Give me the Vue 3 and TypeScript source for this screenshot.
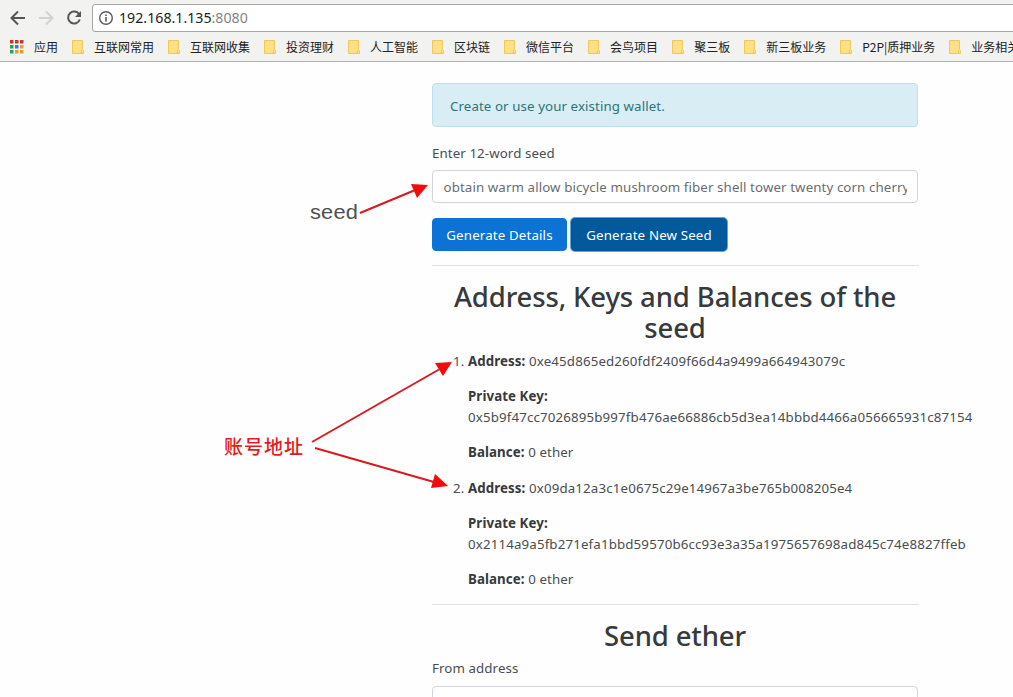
<script setup lang="ts">
import { ref } from 'vue'

interface Account {
  address: string
  privateKey: string
  balance: number
}

const bookmarks: string[] = [
  '互联网常用', '互联网收集', '投资理财', '人工智能', '区块链', '微信平台',
  '会鸟项目', '聚三板', '新三板业务', 'P2P|质押业务', '业务相关',
]

const dots: string[] = [
  '#c8372f', '#c8372f', '#c8372f',
  '#2f9e58', '#3b78d8', '#e0a030',
  '#2f9e58', '#e0a030', '#e0a030',
]

const seed = ref('obtain warm allow bicycle mushroom fiber shell tower twenty corn cherry')

const accounts: Account[] = [
  {
    address: '0xe45d865ed260fdf2409f66d4a9499a664943079c',
    privateKey: '0x5b9f47cc7026895b997fb476ae66886cb5d3ea14bbbd4466a056665931c87154',
    balance: 0,
  },
  {
    address: '0x09da12a3c1e0675c29e14967a3be765b008205e4',
    privateKey: '0x2114a9a5fb271efa1bbd59570b6cc93e3a35a1975657698ad845c74e8827ffeb',
    balance: 0,
  },
]
</script>

<template>
  <div class="window">
    <header class="chrome">
      <div class="toolbar">
        <svg class="nav" width="92" height="32" viewBox="0 0 92 32" fill="none">
          <path d="M25 18H12M18 11.5L11.5 18L18 24.5" stroke="#555" stroke-width="2" />
          <path d="M39 18H52M46 11.5L52.500 18L46 24.500" stroke="#d3d3d3" stroke-width="2" />
          <path d="M79.300 14.500A6 6 0 1 0 79.800 19.500" stroke="#555" stroke-width="2" />
          <path d="M81 11V17H75Z" fill="#555" />
        </svg>
        <div class="omnibox">
          <svg width="16" height="16" viewBox="0 0 16 16" fill="none">
            <circle cx="8" cy="8" r="6.300" stroke="#5a5a5a" stroke-width="1.400" />
            <path d="M8 7V11.500M8 4.500V6" stroke="#5a5a5a" stroke-width="1.600" />
          </svg>
          <span class="url">192.168.1.135<span class="port">:8080</span></span>
        </div>
      </div>
      <nav class="bookmarks">
        <span class="apps">
          <svg width="14" height="14" viewBox="0 0 14 14">
            <rect v-for="(c, i) in dots" :key="i" :x="(i % 3) * 5" :y="Math.floor(i / 3) * 5" width="3.500" height="3.500" :fill="c" />
          </svg>
          <span>应用</span>
        </span>
        <span v-for="b in bookmarks" :key="b" class="bookmark">
          <svg width="12" height="14" viewBox="0 0 12 14">
            <path d="M.5.5H10.500V9.500L11.500 10.500V13.500H.5Z" fill="#fbe086" stroke="#ecc860" />
            <path d="M9.500 13V10" stroke="#ecc860" />
          </svg>
          <span>{{ b }}</span>
        </span>
      </nav>
    </header>

    <main class="page">
      <div class="alert">Create or use your existing wallet.</div>
      <label class="label" for="seed">Enter 12-word seed</label>
      <input id="seed" v-model="seed" class="field" type="text" />
      <div class="buttons">
        <button class="btn details">Generate Details</button>
        <button class="btn focused">Generate New Seed</button>
      </div>
      <hr />
      <h2>Address, Keys and Balances of the seed</h2>
      <ol>
        <li v-for="(a, i) in accounts" :key="a.address">
          <span class="num">{{ i + 1 }}.</span>
          <p><b>Address:</b> <span class="hex">{{ a.address }}</span></p>
          <p><b>Private Key:</b><br /><span class="hex">{{ a.privateKey }}</span></p>
          <p><b>Balance:</b> {{ a.balance }} ether</p>
        </li>
      </ol>
      <hr />
      <h2>Send ether</h2>
      <label class="label from" for="from">From address</label>
      <input id="from" class="field" type="text" />
    </main>

    <svg class="arrows" width="1013" height="697" viewBox="0 0 1013 697">
      <g stroke="#d81a20" stroke-width="2">
        <path d="M360 213L414 190.500" />
        <path d="M312 442L439 369.500" />
        <path d="M315 448L434 482" />
      </g>
      <g fill="#f40a0a">
        <path d="M428 185L411 184L417 198Z" />
        <path d="M452 362L435 363L443 376Z" />
        <path d="M448 486L435 474L431 488Z" />
      </g>
    </svg>
    <span class="note seed-note">seed</span>
    <span class="note address-note">账号地址</span>
  </div>
</template>

<style>
body {
  margin: 0;
  overflow: hidden;
}
</style>

<style scoped>
.window {
  position: relative;
  width: 1013px;
  height: 697px;
  overflow: hidden;
  background: #fefefe;
  color: #4a4d50;
  font: 13.3px/21px "Noto Sans", "Open Sans", sans-serif;
  letter-spacing: 0.09px;
}
.window * { box-sizing: border-box; }
.chrome {
  height: 62px;
  background: #f2f2f1;
  border-bottom: 1px solid #b4b0b1;
}
.toolbar { display: flex; height: 32px; }
.nav { flex: none; }
.omnibox {
  display: flex;
  flex: none;
  align-items: center;
  gap: 5px;
  width: 940px;
  height: 28px;
  margin-top: 4px;
  padding-left: 5px;
  border: 1px solid #a5a5a5;
  border-radius: 3px;
  background: #fff;
}
.url {
  color: #222;
  font: 14.2px/24px "Noto Sans", sans-serif;
  letter-spacing: 0;
}
.port { color: #858585; }
.bookmarks {
  display: flex;
  gap: 14px;
  height: 29px;
  padding: 1px 0 0 10px;
  align-items: center;
  color: #222;
  font: 12px/16px "Noto Sans CJK SC", sans-serif;
  letter-spacing: 0;
  white-space: nowrap;
}
.apps, .bookmark { display: flex; flex: none; align-items: center; gap: 10px; }

.page { width: 486px; margin: 21px 0 0 432px; }
.alert {
  height: 44px;
  padding: 12px 17px 9px;
  border: 1px solid #bcdff1;
  border-radius: 4px;
  background: #d9edf5;
  color: #2d7479;
}
.label { display: block; height: 21px; margin: 16px 0 6px; }
.field {
  display: block;
  width: 100%;
  height: 33px;
  padding: 0 10.500px;
  border: 1px solid #d3d3dc;
  border-radius: 4px;
  background: #fff;
  color: #6a6d70;
  font: inherit;
  letter-spacing: 0.1px;
  outline: none;
}
.buttons { display: flex; gap: 4px; margin-top: 15px; }
.btn {
  height: 33px;
  padding: 2px 0 0;
  border: 1px solid #0c72d6;
  border-radius: 4px;
  background: #0c72d6;
  color: #fff;
  font: inherit;
  letter-spacing: 0.15px;
}
.details { width: 135px; }
.focused {
  width: 156px;
  border-color: #01549b;
  background: #025a9d;
  box-shadow: 0 0 0 1px #5ba4e0;
}
hr {
  width: 487px;
  height: 1px;
  margin: 14px 0 15px;
  border: 0;
  background: #e1e1e5;
}
h2 {
  margin: 0;
  color: #373a3c;
  font: 500 27.5px/31px "Noto Sans", "Open Sans", sans-serif;
  letter-spacing: -0.13px;
  text-align: center;
}
ol { margin: 8px 0 0; padding: 0 0 0 36px; list-style: none; }
li { position: relative; height: 127px; }
li + li { height: 112px; }
.num { position: absolute; left: -15px; }
p { margin: 0 0 14px; white-space: nowrap; }
b { color: #373a3c; }
.hex { letter-spacing: 0.145px; }
.from { margin: 7px 0; }
.arrows { position: absolute; left: 0; top: 0; pointer-events: none; }
.note { position: absolute; white-space: nowrap; }
.seed-note {
  left: 310px;
  top: 200px;
  color: #505050;
  font: 20px/24px "Liberation Sans", sans-serif;
  letter-spacing: 0.2px;
  transform: scaleX(1.09);
  transform-origin: left;
}
.address-note { left: 224px; top: 433px; color: #e51a20; font: 500 19px/26px "Noto Sans CJK SC", sans-serif; letter-spacing: 1px; }
</style>
